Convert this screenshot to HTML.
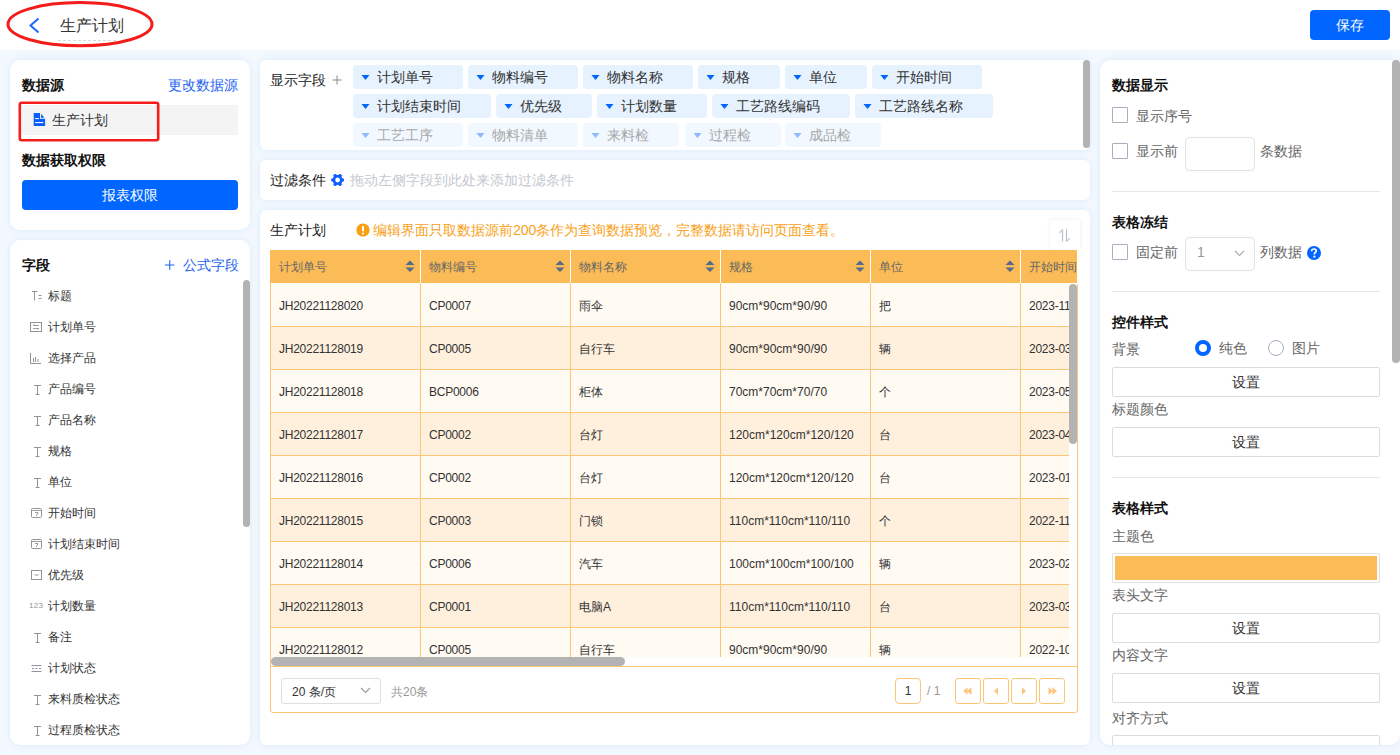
<!DOCTYPE html>
<html><head><meta charset="utf-8">
<style>
*{box-sizing:border-box;margin:0;padding:0}
html,body{width:1400px;height:755px;overflow:hidden}
body{position:relative;background:#f3f8fe;font-family:"Liberation Sans",sans-serif;color:#333;font-size:14px}
.a{position:absolute}
.t{position:absolute;white-space:nowrap;line-height:20px}
.card{position:absolute;background:#fff;border-radius:8px;box-shadow:0 0 6px rgba(20,130,250,.11)}
.hdr{position:absolute;left:0;top:0;width:1400px;height:50px;background:#fff}
.b{font-weight:bold;color:#111}
.blue{color:#1d63f0}
.btn{position:absolute;background:#0066ff;color:#fff;border-radius:4px;text-align:center}
</style></head><body>

<!-- header -->
<div class="hdr">
  <svg class="a" style="left:0;top:0" width="200" height="50">
    <ellipse cx="80" cy="24.2" rx="72" ry="21.6" fill="none" stroke="#f51c1c" stroke-width="3"/>
    <polyline points="38.5,18.5 30.5,25.5 38.5,32.5" fill="none" stroke="#1a66ff" stroke-width="2"/>
    <line x1="58" y1="40.5" x2="117" y2="40.5" stroke="#d8d8d8" stroke-width="1" stroke-dasharray="3,2"/>
  </svg>
  <div class="t" style="left:60px;top:16px;font-size:16px;color:#333">生产计划</div>
  <div class="btn" style="left:1310px;top:10px;width:80px;height:30px;line-height:30px">保存</div>
</div>

<!-- left card 1 -->
<div class="card" style="left:10px;top:60px;width:240px;height:170px;border-radius:10px"></div>
<div class="t b" style="left:22px;top:75px">数据源</div>
<div class="t blue" style="left:168px;top:75px">更改数据源</div>
<div class="a" style="left:22px;top:105px;width:216px;height:30px;background:#f4f4f4;border-radius:2px"></div>
<svg class="a" style="left:33px;top:112px" width="13" height="15" viewBox="0 0 13 15">
  <path d="M0.7 1H7V6.8H12.1V13.6a0.5 0.5 0 0 1 -0.5 0.5H1.2a0.5 0.5 0 0 1 -0.5 -0.5Z" fill="#0a5cff"/>
  <path d="M8 1.8L11.4 5.8H8Z" fill="#0a5cff"/>
  <rect x="2.2" y="6" width="3.6" height="1.1" fill="#fff"/><rect x="2.2" y="10" width="8.1" height="1.1" fill="#fff"/>
</svg>
<div class="t" style="left:52px;top:110px;color:#333">生产计划</div>
<svg class="a" style="left:0;top:90px" width="180" height="60"><rect x="19.8" y="12.8" width="138.4" height="37.4" rx="2" fill="none" stroke="#f51c1c" stroke-width="2.6"/></svg>
<div class="t b" style="left:22px;top:150px">数据获取权限</div>
<div class="btn" style="left:22px;top:180px;width:216px;height:30px;line-height:30px">报表权限</div>

<!-- left card 2 -->
<div class="card" style="left:10px;top:240px;width:240px;height:505px;border-radius:10px"></div>
<div class="t b" style="left:22px;top:255px">字段</div>
<svg class="a" style="left:165px;top:260px" width="10" height="10"><path d="M0 5H9.5M4.75 0.2V9.8" stroke="#1d63f0" stroke-width="1.1"/></svg><div class="t blue" style="left:183px;top:255px">公式字段</div>
<div class="a" style="left:243px;top:280px;width:7px;height:247px;background:#b3b3b3;border-radius:4px"></div>
<svg class="a" style="left:30px;top:288px" width="14" height="16" viewBox="0 0 14 16"><path d="M2 3.5H7.5M4.5 3.5V12.5M8.5 7.5H11.5M8.5 10.5H11.5" stroke="#8f949c" stroke-width="1" fill="none"/></svg>
<div class="t" style="left:48px;top:286px;font-size:12px;color:#333">标题</div>
<svg class="a" style="left:30px;top:319px" width="14" height="16" viewBox="0 0 14 16"><rect x="0.5" y="3.5" width="11" height="9" stroke="#8f949c" stroke-width="1" fill="none"/><path d="M3 6.5H9M3 9.5H9M3 6.5L4.5 5.3M9 9.5L7.5 10.7" stroke="#8f949c" stroke-width="0.9" fill="none"/></svg>
<div class="t" style="left:48px;top:317px;font-size:12px;color:#333">计划单号</div>
<svg class="a" style="left:30px;top:350px" width="14" height="16" viewBox="0 0 14 16"><path d="M0.5 3V13.5H11M3.5 12V8M5.5 12V7M8 12V9" stroke="#8f949c" stroke-width="1" fill="none"/></svg>
<div class="t" style="left:48px;top:348px;font-size:12px;color:#333">选择产品</div>
<svg class="a" style="left:30px;top:381px" width="14" height="16" viewBox="0 0 14 16"><path d="M4 4.5H11M7.5 4.5V13M5.5 13.5H9.5" stroke="#8f949c" stroke-width="1" fill="none"/></svg>
<div class="t" style="left:48px;top:379px;font-size:12px;color:#333">产品编号</div>
<svg class="a" style="left:30px;top:412px" width="14" height="16" viewBox="0 0 14 16"><path d="M4 4.5H11M7.5 4.5V13M5.5 13.5H9.5" stroke="#8f949c" stroke-width="1" fill="none"/></svg>
<div class="t" style="left:48px;top:410px;font-size:12px;color:#333">产品名称</div>
<svg class="a" style="left:30px;top:443px" width="14" height="16" viewBox="0 0 14 16"><path d="M4 4.5H11M7.5 4.5V13M5.5 13.5H9.5" stroke="#8f949c" stroke-width="1" fill="none"/></svg>
<div class="t" style="left:48px;top:441px;font-size:12px;color:#333">规格</div>
<svg class="a" style="left:30px;top:474px" width="14" height="16" viewBox="0 0 14 16"><path d="M4 4.5H11M7.5 4.5V13M5.5 13.5H9.5" stroke="#8f949c" stroke-width="1" fill="none"/></svg>
<div class="t" style="left:48px;top:472px;font-size:12px;color:#333">单位</div>
<svg class="a" style="left:30px;top:505px" width="14" height="16" viewBox="0 0 14 16"><rect x="1.5" y="3.5" width="10" height="9" rx="1" stroke="#8f949c" stroke-width="1" fill="none"/><path d="M1.5 5.5H11.5M5 7.5H8L6.3 11" stroke="#8f949c" stroke-width="0.9" fill="none"/></svg>
<div class="t" style="left:48px;top:503px;font-size:12px;color:#333">开始时间</div>
<svg class="a" style="left:30px;top:536px" width="14" height="16" viewBox="0 0 14 16"><rect x="1.5" y="3.5" width="10" height="9" rx="1" stroke="#8f949c" stroke-width="1" fill="none"/><path d="M1.5 5.5H11.5M5 7.5H8L6.3 11" stroke="#8f949c" stroke-width="0.9" fill="none"/></svg>
<div class="t" style="left:48px;top:534px;font-size:12px;color:#333">计划结束时间</div>
<svg class="a" style="left:30px;top:567px" width="14" height="16" viewBox="0 0 14 16"><rect x="1.5" y="3.5" width="10" height="9" stroke="#8f949c" stroke-width="1" fill="none"/><path d="M4.5 7L6.5 9L8.5 7" stroke="#8f949c" stroke-width="1" fill="none"/></svg>
<div class="t" style="left:48px;top:565px;font-size:12px;color:#333">优先级</div>
<div class="t" style="left:29px;top:596px;font-size:8px;color:#8f949c;letter-spacing:0.3px">123</div>
<div class="t" style="left:48px;top:596px;font-size:12px;color:#333">计划数量</div>
<svg class="a" style="left:30px;top:629px" width="14" height="16" viewBox="0 0 14 16"><path d="M4 4.5H11M7.5 4.5V13M5.5 13.5H9.5" stroke="#8f949c" stroke-width="1" fill="none"/></svg>
<div class="t" style="left:48px;top:627px;font-size:12px;color:#333">备注</div>
<svg class="a" style="left:30px;top:660px" width="14" height="16" viewBox="0 0 14 16"><path d="M1.5 5.5H11.5M2 8.5H4M5.5 8.5H7.5M9 8.5H11M1.5 11.5H11.5" stroke="#8f949c" stroke-width="1" fill="none"/></svg>
<div class="t" style="left:48px;top:658px;font-size:12px;color:#333">计划状态</div>
<svg class="a" style="left:30px;top:691px" width="14" height="16" viewBox="0 0 14 16"><path d="M4 4.5H11M7.5 4.5V13M5.5 13.5H9.5" stroke="#8f949c" stroke-width="1" fill="none"/></svg>
<div class="t" style="left:48px;top:689px;font-size:12px;color:#333">来料质检状态</div>
<svg class="a" style="left:30px;top:722px" width="14" height="16" viewBox="0 0 14 16"><path d="M4 4.5H11M7.5 4.5V13M5.5 13.5H9.5" stroke="#8f949c" stroke-width="1" fill="none"/></svg>
<div class="t" style="left:48px;top:720px;font-size:12px;color:#333">过程质检状态</div>

<!-- middle: display fields -->
<div class="card" style="left:260px;top:60px;width:830px;height:90px;border-radius:6px"></div>
<div class="t" style="left:270px;top:70px;color:#222">显示字段</div>
<svg class="a" style="left:332px;top:75px" width="10" height="10"><path d="M0.5 5H9.5M5 0.5V9.5" stroke="#888" stroke-width="1"/></svg>
<div class="a" style="left:353px;top:65px;width:110px;height:24px;background:#e6f2fe;border-radius:4px"></div>
<svg class="a" style="left:361px;top:75px" width="9" height="5"><path d="M0.5 0H8.5L4.5 5Z" fill="#0066ff"/></svg>
<div class="t" style="left:377px;top:67px;color:#333">计划单号</div>
<div class="a" style="left:468px;top:65px;width:110px;height:24px;background:#e6f2fe;border-radius:4px"></div>
<svg class="a" style="left:476px;top:75px" width="9" height="5"><path d="M0.5 0H8.5L4.5 5Z" fill="#0066ff"/></svg>
<div class="t" style="left:492px;top:67px;color:#333">物料编号</div>
<div class="a" style="left:583px;top:65px;width:110px;height:24px;background:#e6f2fe;border-radius:4px"></div>
<svg class="a" style="left:591px;top:75px" width="9" height="5"><path d="M0.5 0H8.5L4.5 5Z" fill="#0066ff"/></svg>
<div class="t" style="left:607px;top:67px;color:#333">物料名称</div>
<div class="a" style="left:698px;top:65px;width:82px;height:24px;background:#e6f2fe;border-radius:4px"></div>
<svg class="a" style="left:706px;top:75px" width="9" height="5"><path d="M0.5 0H8.5L4.5 5Z" fill="#0066ff"/></svg>
<div class="t" style="left:722px;top:67px;color:#333">规格</div>
<div class="a" style="left:785px;top:65px;width:82px;height:24px;background:#e6f2fe;border-radius:4px"></div>
<svg class="a" style="left:793px;top:75px" width="9" height="5"><path d="M0.5 0H8.5L4.5 5Z" fill="#0066ff"/></svg>
<div class="t" style="left:809px;top:67px;color:#333">单位</div>
<div class="a" style="left:872px;top:65px;width:110px;height:24px;background:#e6f2fe;border-radius:4px"></div>
<svg class="a" style="left:880px;top:75px" width="9" height="5"><path d="M0.5 0H8.5L4.5 5Z" fill="#0066ff"/></svg>
<div class="t" style="left:896px;top:67px;color:#333">开始时间</div>
<div class="a" style="left:353px;top:94px;width:138px;height:24px;background:#e6f2fe;border-radius:4px"></div>
<svg class="a" style="left:361px;top:104px" width="9" height="5"><path d="M0.5 0H8.5L4.5 5Z" fill="#0066ff"/></svg>
<div class="t" style="left:377px;top:96px;color:#333">计划结束时间</div>
<div class="a" style="left:496px;top:94px;width:96px;height:24px;background:#e6f2fe;border-radius:4px"></div>
<svg class="a" style="left:504px;top:104px" width="9" height="5"><path d="M0.5 0H8.5L4.5 5Z" fill="#0066ff"/></svg>
<div class="t" style="left:520px;top:96px;color:#333">优先级</div>
<div class="a" style="left:597px;top:94px;width:110px;height:24px;background:#e6f2fe;border-radius:4px"></div>
<svg class="a" style="left:605px;top:104px" width="9" height="5"><path d="M0.5 0H8.5L4.5 5Z" fill="#0066ff"/></svg>
<div class="t" style="left:621px;top:96px;color:#333">计划数量</div>
<div class="a" style="left:712px;top:94px;width:138px;height:24px;background:#e6f2fe;border-radius:4px"></div>
<svg class="a" style="left:720px;top:104px" width="9" height="5"><path d="M0.5 0H8.5L4.5 5Z" fill="#0066ff"/></svg>
<div class="t" style="left:736px;top:96px;color:#333">工艺路线编码</div>
<div class="a" style="left:855px;top:94px;width:138px;height:24px;background:#e6f2fe;border-radius:4px"></div>
<svg class="a" style="left:863px;top:104px" width="9" height="5"><path d="M0.5 0H8.5L4.5 5Z" fill="#0066ff"/></svg>
<div class="t" style="left:879px;top:96px;color:#333">工艺路线名称</div>
<div class="a" style="left:353px;top:123px;width:110px;height:24px;background:#f1f8ff;border-radius:4px"></div>
<svg class="a" style="left:361px;top:133px" width="9" height="5"><path d="M0.5 0H8.5L4.5 5Z" fill="#8fb8ff"/></svg>
<div class="t" style="left:377px;top:125px;color:#a8a8a8">工艺工序</div>
<div class="a" style="left:468px;top:123px;width:110px;height:24px;background:#f1f8ff;border-radius:4px"></div>
<svg class="a" style="left:476px;top:133px" width="9" height="5"><path d="M0.5 0H8.5L4.5 5Z" fill="#8fb8ff"/></svg>
<div class="t" style="left:492px;top:125px;color:#a8a8a8">物料清单</div>
<div class="a" style="left:583px;top:123px;width:96px;height:24px;background:#f1f8ff;border-radius:4px"></div>
<svg class="a" style="left:591px;top:133px" width="9" height="5"><path d="M0.5 0H8.5L4.5 5Z" fill="#8fb8ff"/></svg>
<div class="t" style="left:607px;top:125px;color:#a8a8a8">来料检</div>
<div class="a" style="left:685px;top:123px;width:96px;height:24px;background:#f1f8ff;border-radius:4px"></div>
<svg class="a" style="left:693px;top:133px" width="9" height="5"><path d="M0.5 0H8.5L4.5 5Z" fill="#8fb8ff"/></svg>
<div class="t" style="left:709px;top:125px;color:#a8a8a8">过程检</div>
<div class="a" style="left:785px;top:123px;width:96px;height:24px;background:#f1f8ff;border-radius:4px"></div>
<svg class="a" style="left:793px;top:133px" width="9" height="5"><path d="M0.5 0H8.5L4.5 5Z" fill="#8fb8ff"/></svg>
<div class="t" style="left:809px;top:125px;color:#a8a8a8">成品检</div>
<div class="a" style="left:1083px;top:60px;width:7px;height:88px;background:#b3b3b3;border-radius:4px"></div>

<!-- filter -->
<div class="card" style="left:260px;top:160px;width:830px;height:40px;border-radius:6px"></div>
<div class="t" style="left:270px;top:170px;color:#222">过滤条件</div>
<svg class="a" style="left:331px;top:174px" width="14" height="13" viewBox="0 0 14 13">
  <g transform="translate(6.6 6)" fill="#0b5cff">
    <circle r="5.1"/>
    <rect x="-6.4" y="-1.6" width="12.8" height="3.2" rx="0.8"/>
    <rect x="-6.4" y="-1.6" width="12.8" height="3.2" rx="0.8" transform="rotate(60)"/>
    <rect x="-6.4" y="-1.6" width="12.8" height="3.2" rx="0.8" transform="rotate(120)"/>
    <circle r="2.4" fill="#fff"/>
  </g>
</svg>
<div class="t" style="left:350px;top:170px;color:#c4c8d0">拖动左侧字段到此处来添加过滤条件</div>

<!-- table card -->
<div class="card" style="left:260px;top:210px;width:830px;height:535px;border-radius:6px"></div>
<div class="t" style="left:270px;top:220px;color:#222">生产计划</div>
<svg class="a" style="left:356px;top:223px" width="14" height="14" viewBox="0 0 14 14">
  <circle cx="7" cy="7" r="6.6" fill="#fa9e12"/>
  <rect x="6" y="2.8" width="2" height="5.8" rx="1" fill="#fff"/><circle cx="7" cy="10.6" r="1.1" fill="#fff"/>
</svg>
<div class="t" style="left:373px;top:220px;color:#f99f17">编辑界面只取数据源前200条作为查询数据预览，完整数据请访问页面查看。</div>
<div class="a" style="left:1050px;top:220px;width:30px;height:30px;background:#fff;box-shadow:0 0 4px rgba(0,0,0,.08)"></div>
<svg class="a" style="left:1058px;top:228px" width="16" height="16" viewBox="0 0 16 16"><path d="M4.5 1.5V13.5M4.5 1.5L1.3 5M8.5 1.5V13.5M8.5 13.5L11.7 10" stroke="#b4bbc8" stroke-width="1.1" fill="none"/></svg>

<div class="a" style="left:270px;top:250px;width:808px;height:463px;border:1px solid #fcc679;border-radius:0 0 3px 3px;background:#fff"></div>
<div class="a" style="left:270px;top:250px;width:807px;height:33px;background:#fbbb57"></div>
<div class="a" style="left:271px;top:283px;width:798px;height:374px;overflow:hidden;background:#fffaf2">
<div class="a" style="left:0;top:1px;width:900px;height:43px;background:#fffaf2;border-bottom:1px solid #fcc679"></div>
<div class="t" style="left:8px;top:13px;font-size:12px;color:#333;letter-spacing:-0.25px">JH20221128020</div>
<div class="t" style="left:158px;top:13px;font-size:12px;color:#333;letter-spacing:-0.25px">CP0007</div>
<div class="t" style="left:308px;top:13px;font-size:12px;color:#333;letter-spacing:0px">雨伞</div>
<div class="t" style="left:458px;top:13px;font-size:12px;color:#333;letter-spacing:0px">90cm*90cm*90/90</div>
<div class="t" style="left:608px;top:13px;font-size:12px;color:#333;letter-spacing:0px">把</div>
<div class="t" style="left:758px;top:13px;font-size:12px;color:#333;letter-spacing:-0.25px">2023-11-28</div>
<div class="a" style="left:0;top:44px;width:900px;height:43px;background:#fef0dd;border-bottom:1px solid #fcc679"></div>
<div class="t" style="left:8px;top:56px;font-size:12px;color:#333;letter-spacing:-0.25px">JH20221128019</div>
<div class="t" style="left:158px;top:56px;font-size:12px;color:#333;letter-spacing:-0.25px">CP0005</div>
<div class="t" style="left:308px;top:56px;font-size:12px;color:#333;letter-spacing:0px">自行车</div>
<div class="t" style="left:458px;top:56px;font-size:12px;color:#333;letter-spacing:0px">90cm*90cm*90/90</div>
<div class="t" style="left:608px;top:56px;font-size:12px;color:#333;letter-spacing:0px">辆</div>
<div class="t" style="left:758px;top:56px;font-size:12px;color:#333;letter-spacing:-0.25px">2023-03-01</div>
<div class="a" style="left:0;top:87px;width:900px;height:43px;background:#fffaf2;border-bottom:1px solid #fcc679"></div>
<div class="t" style="left:8px;top:99px;font-size:12px;color:#333;letter-spacing:-0.25px">JH20221128018</div>
<div class="t" style="left:158px;top:99px;font-size:12px;color:#333;letter-spacing:-0.25px">BCP0006</div>
<div class="t" style="left:308px;top:99px;font-size:12px;color:#333;letter-spacing:0px">柜体</div>
<div class="t" style="left:458px;top:99px;font-size:12px;color:#333;letter-spacing:0px">70cm*70cm*70/70</div>
<div class="t" style="left:608px;top:99px;font-size:12px;color:#333;letter-spacing:0px">个</div>
<div class="t" style="left:758px;top:99px;font-size:12px;color:#333;letter-spacing:-0.25px">2023-05-01</div>
<div class="a" style="left:0;top:130px;width:900px;height:43px;background:#fef0dd;border-bottom:1px solid #fcc679"></div>
<div class="t" style="left:8px;top:142px;font-size:12px;color:#333;letter-spacing:-0.25px">JH20221128017</div>
<div class="t" style="left:158px;top:142px;font-size:12px;color:#333;letter-spacing:-0.25px">CP0002</div>
<div class="t" style="left:308px;top:142px;font-size:12px;color:#333;letter-spacing:0px">台灯</div>
<div class="t" style="left:458px;top:142px;font-size:12px;color:#333;letter-spacing:0px">120cm*120cm*120/120</div>
<div class="t" style="left:608px;top:142px;font-size:12px;color:#333;letter-spacing:0px">台</div>
<div class="t" style="left:758px;top:142px;font-size:12px;color:#333;letter-spacing:-0.25px">2023-04-01</div>
<div class="a" style="left:0;top:173px;width:900px;height:43px;background:#fffaf2;border-bottom:1px solid #fcc679"></div>
<div class="t" style="left:8px;top:185px;font-size:12px;color:#333;letter-spacing:-0.25px">JH20221128016</div>
<div class="t" style="left:158px;top:185px;font-size:12px;color:#333;letter-spacing:-0.25px">CP0002</div>
<div class="t" style="left:308px;top:185px;font-size:12px;color:#333;letter-spacing:0px">台灯</div>
<div class="t" style="left:458px;top:185px;font-size:12px;color:#333;letter-spacing:0px">120cm*120cm*120/120</div>
<div class="t" style="left:608px;top:185px;font-size:12px;color:#333;letter-spacing:0px">台</div>
<div class="t" style="left:758px;top:185px;font-size:12px;color:#333;letter-spacing:-0.25px">2023-01-01</div>
<div class="a" style="left:0;top:216px;width:900px;height:43px;background:#fef0dd;border-bottom:1px solid #fcc679"></div>
<div class="t" style="left:8px;top:228px;font-size:12px;color:#333;letter-spacing:-0.25px">JH20221128015</div>
<div class="t" style="left:158px;top:228px;font-size:12px;color:#333;letter-spacing:-0.25px">CP0003</div>
<div class="t" style="left:308px;top:228px;font-size:12px;color:#333;letter-spacing:0px">门锁</div>
<div class="t" style="left:458px;top:228px;font-size:12px;color:#333;letter-spacing:0px">110cm*110cm*110/110</div>
<div class="t" style="left:608px;top:228px;font-size:12px;color:#333;letter-spacing:0px">个</div>
<div class="t" style="left:758px;top:228px;font-size:12px;color:#333;letter-spacing:-0.25px">2022-11-01</div>
<div class="a" style="left:0;top:259px;width:900px;height:43px;background:#fffaf2;border-bottom:1px solid #fcc679"></div>
<div class="t" style="left:8px;top:271px;font-size:12px;color:#333;letter-spacing:-0.25px">JH20221128014</div>
<div class="t" style="left:158px;top:271px;font-size:12px;color:#333;letter-spacing:-0.25px">CP0006</div>
<div class="t" style="left:308px;top:271px;font-size:12px;color:#333;letter-spacing:0px">汽车</div>
<div class="t" style="left:458px;top:271px;font-size:12px;color:#333;letter-spacing:0px">100cm*100cm*100/100</div>
<div class="t" style="left:608px;top:271px;font-size:12px;color:#333;letter-spacing:0px">辆</div>
<div class="t" style="left:758px;top:271px;font-size:12px;color:#333;letter-spacing:-0.25px">2023-02-01</div>
<div class="a" style="left:0;top:302px;width:900px;height:43px;background:#fef0dd;border-bottom:1px solid #fcc679"></div>
<div class="t" style="left:8px;top:314px;font-size:12px;color:#333;letter-spacing:-0.25px">JH20221128013</div>
<div class="t" style="left:158px;top:314px;font-size:12px;color:#333;letter-spacing:-0.25px">CP0001</div>
<div class="t" style="left:308px;top:314px;font-size:12px;color:#333;letter-spacing:0px">电脑A</div>
<div class="t" style="left:458px;top:314px;font-size:12px;color:#333;letter-spacing:0px">110cm*110cm*110/110</div>
<div class="t" style="left:608px;top:314px;font-size:12px;color:#333;letter-spacing:0px">台</div>
<div class="t" style="left:758px;top:314px;font-size:12px;color:#333;letter-spacing:-0.25px">2023-03-01</div>
<div class="a" style="left:0;top:345px;width:900px;height:43px;background:#fffaf2;border-bottom:1px solid #fcc679"></div>
<div class="t" style="left:8px;top:357px;font-size:12px;color:#333;letter-spacing:-0.25px">JH20221128012</div>
<div class="t" style="left:158px;top:357px;font-size:12px;color:#333;letter-spacing:-0.25px">CP0005</div>
<div class="t" style="left:308px;top:357px;font-size:12px;color:#333;letter-spacing:0px">自行车</div>
<div class="t" style="left:458px;top:357px;font-size:12px;color:#333;letter-spacing:0px">90cm*90cm*90/90</div>
<div class="t" style="left:608px;top:357px;font-size:12px;color:#333;letter-spacing:0px">辆</div>
<div class="t" style="left:758px;top:357px;font-size:12px;color:#333;letter-spacing:-0.25px">2022-10-01</div>
<div class="a" style="left:149px;top:0;width:1px;height:400px;background:#fcc679"></div>
<div class="a" style="left:299px;top:0;width:1px;height:400px;background:#fcc679"></div>
<div class="a" style="left:449px;top:0;width:1px;height:400px;background:#fcc679"></div>
<div class="a" style="left:599px;top:0;width:1px;height:400px;background:#fcc679"></div>
<div class="a" style="left:749px;top:0;width:1px;height:400px;background:#fcc679"></div>
</div>
<div class="t" style="left:279px;top:257px;font-size:12px;color:#666">计划单号</div>
<svg class="a" style="left:405px;top:260px" width="10" height="13"><path d="M0.5 5L5 0.5L9.5 5Z M0.5 7.5L5 12L9.5 7.5Z" fill="#56698a"/></svg>
<div class="a" style="left:420px;top:250px;width:1px;height:33px;background:#fff"></div>
<div class="t" style="left:429px;top:257px;font-size:12px;color:#666">物料编号</div>
<svg class="a" style="left:555px;top:260px" width="10" height="13"><path d="M0.5 5L5 0.5L9.5 5Z M0.5 7.5L5 12L9.5 7.5Z" fill="#56698a"/></svg>
<div class="a" style="left:570px;top:250px;width:1px;height:33px;background:#fff"></div>
<div class="t" style="left:579px;top:257px;font-size:12px;color:#666">物料名称</div>
<svg class="a" style="left:705px;top:260px" width="10" height="13"><path d="M0.5 5L5 0.5L9.5 5Z M0.5 7.5L5 12L9.5 7.5Z" fill="#56698a"/></svg>
<div class="a" style="left:720px;top:250px;width:1px;height:33px;background:#fff"></div>
<div class="t" style="left:729px;top:257px;font-size:12px;color:#666">规格</div>
<svg class="a" style="left:855px;top:260px" width="10" height="13"><path d="M0.5 5L5 0.5L9.5 5Z M0.5 7.5L5 12L9.5 7.5Z" fill="#56698a"/></svg>
<div class="a" style="left:870px;top:250px;width:1px;height:33px;background:#fff"></div>
<div class="t" style="left:879px;top:257px;font-size:12px;color:#666">单位</div>
<svg class="a" style="left:1005px;top:260px" width="10" height="13"><path d="M0.5 5L5 0.5L9.5 5Z M0.5 7.5L5 12L9.5 7.5Z" fill="#56698a"/></svg>
<div class="a" style="left:1020px;top:250px;width:1px;height:33px;background:#fff"></div>
<div class="t" style="left:1029px;top:257px;font-size:12px;color:#666">开始时间</div>
<div class="a" style="left:1077px;top:248px;width:1px;height:36px;background:#fff"></div>
<div class="a" style="left:1069px;top:284px;width:8px;height:160px;background:#b3b3b3;border-radius:4px"></div>
<div class="a" style="left:271px;top:657px;width:798px;height:9px;background:#fff"></div>
<div class="a" style="left:271px;top:657px;width:354px;height:9px;background:#b3b3b3;border-radius:5px"></div>
<div class="a" style="left:270px;top:666px;width:808px;height:1px;background:#fcc679"></div>
<div class="a" style="left:281px;top:678px;width:100px;height:26px;border:1px solid #dcdfe6;border-radius:3px"></div>
<div class="t" style="left:292px;top:682px;font-size:12px;color:#333">20 条/页</div>
<svg class="a" style="left:360px;top:687px" width="11" height="7"><path d="M1 1L5.5 5.5L10 1" stroke="#999" stroke-width="1.1" fill="none"/></svg>
<div class="t" style="left:391px;top:682px;font-size:12px;color:#999">共20条</div>
<div class="a" style="left:895px;top:678px;width:26px;height:26px;border:1px solid #fcc679;border-radius:4px"></div>
<div class="t" style="left:895px;top:681px;width:26px;text-align:center;font-size:12px;color:#333">1</div>
<div class="t" style="left:927px;top:681px;font-size:12px;color:#999">/ 1</div>
<div class="a" style="left:955px;top:678px;width:26px;height:26px;border:1px solid #fcc679;border-radius:3px"></div>
<svg class="a" style="left:959px;top:682px" width="18" height="18"><path d="M4 9L8.5 5.3V12.7ZM8 9L12.5 5.3V12.7Z" fill="#fcc57a"/></svg>
<div class="a" style="left:983px;top:678px;width:26px;height:26px;border:1px solid #fcc679;border-radius:3px"></div>
<svg class="a" style="left:987px;top:682px" width="18" height="18"><path d="M7 9L11 5.3V12.7Z" fill="#fcc57a"/></svg>
<div class="a" style="left:1011px;top:678px;width:26px;height:26px;border:1px solid #fcc679;border-radius:3px"></div>
<svg class="a" style="left:1015px;top:682px" width="18" height="18"><path d="M11 9L7 5.3V12.7Z" fill="#fcc57a"/></svg>
<div class="a" style="left:1039px;top:678px;width:26px;height:26px;border:1px solid #fcc679;border-radius:3px"></div>
<svg class="a" style="left:1043px;top:682px" width="18" height="18"><path d="M14 9L9.5 5.3V12.7ZM10 9L5.5 5.3V12.7Z" fill="#fcc57a"/></svg>

<!-- right panel -->
<div class="card" style="left:1100px;top:60px;width:300px;height:685px;border-radius:10px"></div>
<div class="a" style="left:1100px;top:60px;width:300px;height:685px;overflow:hidden;border-radius:10px"><div class="a" style="left:-1100px;top:-60px;width:1400px;height:755px"><div class="t" style="left:1112px;top:75px;color:#111;font-size:14px;font-weight:bold;">数据显示</div>
<div class="a" style="left:1112px;top:107px;width:16px;height:16px;border:1px solid #a9aec0;border-radius:1px;background:#fff"></div>
<div class="t" style="left:1136px;top:106px;color:#666;font-size:14px;">显示序号</div>
<div class="a" style="left:1112px;top:143px;width:16px;height:16px;border:1px solid #a9aec0;border-radius:1px;background:#fff"></div>
<div class="t" style="left:1136px;top:141px;color:#666;font-size:14px;">显示前</div>
<div class="a" style="left:1185px;top:137px;width:70px;height:34px;border:1px solid #e2e2e2;border-radius:4px"></div>
<div class="t" style="left:1260px;top:141px;color:#666;font-size:14px;">条数据</div>
<div class="a" style="left:1112px;top:191px;width:268px;height:1px;background:#e6e6e6"></div>
<div class="t" style="left:1112px;top:212px;color:#111;font-size:14px;font-weight:bold;">表格冻结</div>
<div class="a" style="left:1112px;top:244px;width:16px;height:16px;border:1px solid #a9aec0;border-radius:1px;background:#fff"></div>
<div class="t" style="left:1136px;top:242px;color:#666;font-size:14px;">固定前</div>
<div class="a" style="left:1185px;top:237px;width:70px;height:34px;border:1px solid #e2e2e2;border-radius:4px"></div>
<div class="t" style="left:1197px;top:242px;color:#999;font-size:14px;">1</div>
<svg class="a" style="left:1234px;top:250px" width="11" height="7"><path d="M1 1L5.5 5.5L10 1" stroke="#aaa" stroke-width="1.1" fill="none"/></svg>
<div class="t" style="left:1260px;top:242px;color:#666;font-size:14px;">列数据</div>
<svg class="a" style="left:1307px;top:246px" width="14" height="14" viewBox="0 0 14 14"><circle cx="7" cy="7" r="7" fill="#0066ff"/><path d="M4.6 5.2C4.6 3.8 5.6 3 7 3C8.4 3 9.3 3.8 9.3 4.9C9.3 6.3 7.4 6.5 7.4 8V8.6" stroke="#fff" stroke-width="1.7" fill="none"/><rect x="6.4" y="9.7" width="2" height="1.9" fill="#fff"/></svg>
<div class="a" style="left:1112px;top:291px;width:268px;height:1px;background:#e6e6e6"></div>
<div class="t" style="left:1112px;top:312px;color:#111;font-size:14px;font-weight:bold;">控件样式</div>
<div class="t" style="left:1112px;top:339px;color:#666;font-size:14px;">背景</div>
<div class="a" style="left:1195px;top:340px;width:16px;height:16px;border:4.5px solid #0066ff;border-radius:50%;background:#fff"></div>
<div class="t" style="left:1219px;top:338px;color:#666;font-size:14px;">纯色</div>
<div class="a" style="left:1268px;top:340px;width:16px;height:16px;border:1px solid #a9aec0;border-radius:50%;background:#fff"></div>
<div class="t" style="left:1292px;top:338px;color:#666;font-size:14px;">图片</div>
<div class="a" style="left:1112px;top:367px;width:268px;height:30px;border:1px solid #dcdcdc;border-radius:2px;background:#fff"></div><div class="t" style="left:1112px;top:372px;width:268px;text-align:center;color:#333">设置</div>
<div class="t" style="left:1112px;top:399px;color:#666;font-size:14px;">标题颜色</div>
<div class="a" style="left:1112px;top:427px;width:268px;height:30px;border:1px solid #dcdcdc;border-radius:2px;background:#fff"></div><div class="t" style="left:1112px;top:432px;width:268px;text-align:center;color:#333">设置</div>
<div class="a" style="left:1112px;top:477px;width:268px;height:1px;background:#e6e6e6"></div>
<div class="t" style="left:1112px;top:498px;color:#111;font-size:14px;font-weight:bold;">表格样式</div>
<div class="t" style="left:1112px;top:526px;color:#666;font-size:14px;">主题色</div>
<div class="a" style="left:1112px;top:553px;width:268px;height:30px;border:1px solid #e2e2e2;border-radius:2px;background:#fff"></div>
<div class="a" style="left:1115px;top:556px;width:262px;height:24px;background:#fbbb57"></div>
<div class="t" style="left:1112px;top:585px;color:#666;font-size:14px;">表头文字</div>
<div class="a" style="left:1112px;top:613px;width:268px;height:30px;border:1px solid #dcdcdc;border-radius:2px;background:#fff"></div><div class="t" style="left:1112px;top:618px;width:268px;text-align:center;color:#333">设置</div>
<div class="t" style="left:1112px;top:645px;color:#666;font-size:14px;">内容文字</div>
<div class="a" style="left:1112px;top:673px;width:268px;height:30px;border:1px solid #dcdcdc;border-radius:2px;background:#fff"></div><div class="t" style="left:1112px;top:678px;width:268px;text-align:center;color:#333">设置</div>
<div class="t" style="left:1112px;top:708px;color:#666;font-size:14px;">对齐方式</div>
<div class="a" style="left:1112px;top:735px;width:268px;height:30px;border:1px solid #dcdcdc;border-radius:2px;background:#fff"></div></div></div>
<div class="a" style="left:1392px;top:60px;width:8px;height:303px;background:#b3b3b3;border-radius:4px"></div>

</body></html>
